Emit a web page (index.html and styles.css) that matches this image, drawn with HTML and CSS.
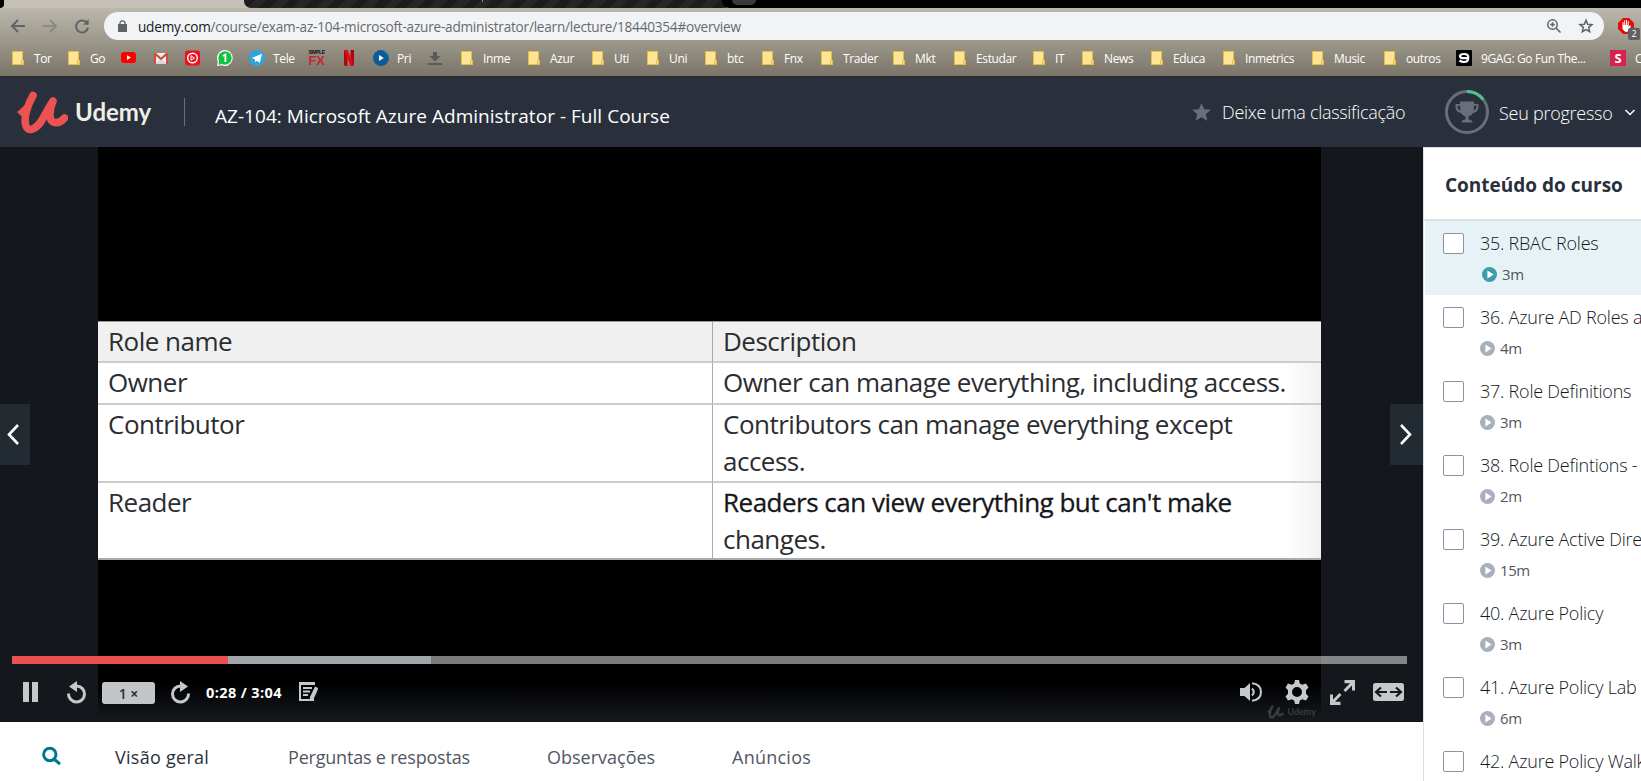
FILE: index.html
```html
<!DOCTYPE html>
<html lang="pt-BR">
<head>
<meta charset="utf-8">
<title>AZ-104: Microsoft Azure Administrator - Full Course | Udemy</title>
<link rel="stylesheet" href="styles.css">
</head>
<body>
<svg class="defs" aria-hidden="true">
  <symbol id="folder" viewBox="0 0 12 14"><path fill="#e5bf45" d="M0 0h11v9h1v5H0z"/><path fill="#ffe593" d="M1 1h9v8.500h-1V13H1z"/><path fill="#ffe593" d="M10 10h1v2.500h-1z"/></symbol>
  <symbol id="play" viewBox="0 0 15 15"><circle cx="7.500" cy="7.500" r="7.500" fill="currentColor"/><path d="M5.400 3.600v7.800l6.200-3.900z" fill="#fff"/></symbol>
  <symbol id="swoosh" viewBox="0 0 51 43"><path fill="none" stroke="currentColor" stroke-width="7.600" stroke-linecap="round" stroke-linejoin="round" d="M16 4.500 C11 13 6 27 9 35 C12 43 21 36 25 29 C29 22 33 14 36 10 C33 17 31 28 36 31 C41 33 45 30 47.500 27"/><path fill="currentColor" d="M13 4 Q10 14 0 21 L4 25 L8 24 L12 18 L18 4z"/></symbol>
</svg>

<div class="browser">
  <div class="tabs"><span class="tab-edge"></span><span class="tab-active"></span><span class="tab-other"><i></i></span><span class="tab-new"><i></i></span></div>
  <div class="toolbar">
    <svg class="nav-icon back" viewBox="0 0 14 14"><path d="M14 7H1M7 1L1 7l6 6"/></svg>
    <svg class="nav-icon forward" viewBox="0 0 14 14"><path d="M0 7h13M7 1l6 6-6 6"/></svg>
    <svg class="nav-icon reload" viewBox="0 0 14 14"><path d="M12 4A6 6 0 1 0 13 8.500"/><path d="M13.700 0v5.800H8z" class="solid"/></svg>
    <div class="omnibox">
      <svg class="lock" viewBox="0 0 9 12"><path d="M0 4h9v8H0z" fill="#5f6368"/><path d="M2 5V3a2.500 2.200 0 0 1 5 0v2" fill="none" stroke="#5f6368" stroke-width="1.300"/></svg>
      <span class="url t"><b>udemy.com</b>/course/exam-az-104-microsoft-azure-administrator/learn/lecture/18440354#overview</span>
      <svg class="zoom" viewBox="0 0 14 14"><circle cx="5.500" cy="5.500" r="4.700"/><path d="M9 9l4.500 4.500M3.200 5.500h4.600M5.500 3.200v4.600"/></svg>
      <svg class="fav" viewBox="0 0 14 14"><path d="M7 1.200l1.700 4 4.300.4-3.300 2.800 1 4.300L7 10.500l-3.700 2.200 1-4.300L1 5.600l4.300-.4z"/></svg>
    </div>
    <div class="blocker"><svg viewBox="0 0 16 16"><path fill="#e40d0d" d="M5 0h6l5 5v6l-5 5H5l-5-5V5z"/><path fill="#fff" d="M4.500 7V4h1v3h.7V2.600h1V7H8V2h1v5h.7V3h1v6l1.300-1.700 1 .7-2 4.500-1.500 1.200H7L4.500 11z"/></svg><span>2</span></div>
  </div>
  <div class="bookmarks">
    <span class="bm"><svg class="fo"><use href="#folder"/></svg><span class="t">Tor</span></span>
    <span class="bm"><svg class="fo"><use href="#folder"/></svg><span class="t">Go</span></span>
    <span class="bm"><svg class="ico yt" viewBox="0 0 16 12"><rect width="15" height="11" x="0" y="0" rx="3" fill="#f00"/><path fill="#fff" d="M6 3.200v4.800l4-2.400z"/></svg></span>
    <span class="bm"><svg class="ico" viewBox="0 0 16 16"><path fill="#f2f2f2" d="M0 3h14v11H0z"/><path fill="#d9d9d9" d="M0 14l7-5 7 5z"/><path fill="#d54b3d" d="M0 3h2l5 4.500L12 3h2v11h-2V6l-5 4.300L2 6v8H0z"/></svg></span>
    <span class="bm"><svg class="ico" viewBox="0 0 16 16"><rect width="15" height="15" y=".5" rx="3" fill="#f00f1c"/><circle cx="7.500" cy="8" r="4.800" fill="#f00f1c" stroke="#fff" stroke-width="1.400"/><path fill="none" stroke="#fff" stroke-width="1" d="M6 5.700v4.600L9.500 8z"/></svg></span>
    <span class="bm"><svg class="ico" viewBox="0 0 16 16"><path fill="#fff" d="M8 0a8 8 0 1 1-3.500 15.300L0 16l.8-4.500A8 8 0 0 1 8 0z"/><circle cx="8" cy="8" r="6.700" fill="#13c143"/><path fill="#13c143" d="M1.400 14.700l.8-4 3 3.200z"/><path d="M6 6l2.400-1.500V12" fill="none" stroke="#fff" stroke-width="1.800"/></svg></span>
    <span class="bm"><svg class="ico" viewBox="0 0 16 16"><circle cx="8" cy="8" r="8" fill="#2ca5e0"/><path fill="#fff" d="M2.800 8L13 3.800l-2.200 9.200-3-2.300-1.500 1.600-.4-3z"/></svg><span class="t">Tele</span></span>
    <span class="bm"><span class="sfx"><i>SIMPLE</i><b>FX</b></span></span>
    <span class="bm"><svg class="ico" viewBox="0 0 16 16"><path fill="#b1060f" d="M0 0h3.500v16L0 15.600zM6.500 0H10v15.600L6.500 16z"/><path fill="#e50914" d="M0 0h3.500L10 15.600 6.500 16z"/></svg></span>
    <span class="bm"><svg class="ico" viewBox="0 0 16 16"><circle cx="8" cy="8" r="8" fill="#0b5c96"/><path fill="#148dc0" d="M8 0a8 8 0 0 1 8 8q-3-6-8-8z"/><path fill="#fff" d="M6 5v6l4.800-3z"/></svg><span class="t">Pri</span></span>
    <span class="bm"><svg class="ico" viewBox="0 0 16 16"><path fill="#5a5a57" d="M5 2h4v4h3.500L7 11.500 1.500 6H5zM0 13h14v2H0z"/></svg></span>
    <span class="bm"><svg class="fo"><use href="#folder"/></svg><span class="t">Inme</span></span>
    <span class="bm"><svg class="fo"><use href="#folder"/></svg><span class="t">Azur</span></span>
    <span class="bm"><svg class="fo"><use href="#folder"/></svg><span class="t">Uti</span></span>
    <span class="bm"><svg class="fo"><use href="#folder"/></svg><span class="t">Uni</span></span>
    <span class="bm"><svg class="fo"><use href="#folder"/></svg><span class="t">btc</span></span>
    <span class="bm"><svg class="fo"><use href="#folder"/></svg><span class="t">Fnx</span></span>
    <span class="bm"><svg class="fo"><use href="#folder"/></svg><span class="t">Trader</span></span>
    <span class="bm"><svg class="fo"><use href="#folder"/></svg><span class="t">Mkt</span></span>
    <span class="bm"><svg class="fo"><use href="#folder"/></svg><span class="t">Estudar</span></span>
    <span class="bm"><svg class="fo"><use href="#folder"/></svg><span class="t">IT</span></span>
    <span class="bm"><svg class="fo"><use href="#folder"/></svg><span class="t">News</span></span>
    <span class="bm"><svg class="fo"><use href="#folder"/></svg><span class="t">Educa</span></span>
    <span class="bm"><svg class="fo"><use href="#folder"/></svg><span class="t">Inmetrics</span></span>
    <span class="bm"><svg class="fo"><use href="#folder"/></svg><span class="t">Music</span></span>
    <span class="bm"><svg class="fo"><use href="#folder"/></svg><span class="t">outros</span></span>
    <span class="bm"><svg class="ico" viewBox="0 0 16 16"><rect width="16" height="16" rx="1" fill="#000"/><path fill="none" stroke="#fff" stroke-width="2.200" d="M12.300 8.200H6.500Q4 8 4 5.800 4.500 4 8 4q4.200 0 4.200 3v1.500Q12 12 8 12q-2.500 0-4.500-1.500"/></svg><span class="t gag">9GAG: Go Fun The...</span></span>
    <span class="bm"><span class="sq">S</span><span class="t gag">C</span></span>
  </div>
</div>

<header class="course-bar">
  <svg class="logo-mark"><use href="#swoosh"/></svg>
  <span class="logo-text t">Udemy</span>
  <span class="sep"></span>
  <h1 class="t">AZ-104: Microsoft Azure Administrator - Full Course</h1>
  <div class="rate"><svg viewBox="0 0 19 18"><path fill="#686f7a" d="M9.500 0l2.600 6.200 6.900.6-5.200 4.300 1.600 6.700-5.900-3.600-5.900 3.600 1.600-6.700L0 6.800l6.900-.6z"/></svg><span class="t">Deixe uma classificação</span></div>
  <div class="progress">
    <svg class="ring" viewBox="0 0 44 44"><circle cx="22" cy="22" r="20.500" fill="none" stroke="#686f7a" stroke-width="3"/><path d="M22 1.500A20.500 20.500 0 0 1 38.200 9.500" fill="none" stroke="#4bc38f" stroke-width="3"/><path fill="#686f7a" d="M15 11.500h14v2.500h4.500v3q0 5-5.500 6-1.500 3-4.500 3.500v3q3.500 0 4 3h-11q.5-3 4-3v-3Q17.500 26 16 23q-5.500-1-5.500-6v-3H15zm-2.500 4.300v1.500q.2 2.500 2.800 3.300l-.3-4.800zm19 0H29l-.3 4.800q2.600-.8 2.800-3.300z"/></svg>
    <span class="t">Seu progresso</span>
    <svg class="chev" viewBox="0 0 10 7"><path d="M.5 1l4.500 4.500L9.500 1"/></svg>
  </div>
</header>

<main class="content">
  <section class="left">
    <div class="player">
      <div class="video">
        <div class="table">
          <div class="cell head"><span class="t">Role name</span></div><div class="cell head"><span class="t">Description</span></div>
          <div class="cell"><span class="t">Owner</span></div><div class="cell"><span class="t">Owner can manage everything, including access.</span></div>
          <div class="cell"><span class="t">Contributor</span></div><div class="cell"><span class="t">Contributors can manage everything except</span><br><span class="t">access.</span></div>
          <div class="cell"><span class="t">Reader</span></div><div class="cell"><span class="t dark">Readers can view everything but can't make</span><br><span class="t">changes.</span></div>
        </div>
        <div class="watermark"><svg><use href="#swoosh"/></svg><span>Udemy</span></div>
      </div>
      <div class="go prev"><svg viewBox="0 0 12 21"><path d="M11 1L2 10.500 11 20"/></svg></div>
      <div class="go next"><svg viewBox="0 0 12 21"><path d="M1 1l9 9.500L1 20"/></svg></div>
      <div class="controls">
        <div class="track"><span class="played"></span><span class="loaded"></span></div>
        <div class="buttons">
          <svg class="c-pause" viewBox="0 0 15 20"><path d="M0 0h6v20H0zM9 0h6v20H9z"/></svg>
          <svg class="c-turn" viewBox="0 0 19 22"><path class="line" d="M1.500 12.500A8 8 0 1 0 9.500 5"/><path d="M2 5.500L10 0v11z"/></svg>
          <span class="speed">1 <small>×</small></span>
          <svg class="c-turn flip" viewBox="0 0 19 22"><path class="line" d="M1.500 12.500A8 8 0 1 0 9.500 5"/><path d="M2 5.500L10 0v11z"/></svg>
          <span class="time t">0:28 / 3:04</span>
          <svg class="c-note" viewBox="0 0 20 20"><path class="line thin" d="M15 3V1H1v17h13v-4M4 6h9M4 9.500h7M4 13h5"/><path d="M0 0h15v3H0zM16 4.500l3 1.500q.5 1-4.500 11L11 19l0-4z"/></svg>
          <svg class="c-vol" viewBox="0 0 22 20"><path d="M0 6h4.500L10 1v18l-5.500-5H0z"/><path class="line thin" d="M12 6.500q3.500 3.500 0 7M12 1.300q9 1 9 8.700t-9 8.700"/></svg>
          <svg class="c-gear" viewBox="0 0 24 24"><path fill-rule="evenodd" d="M10 0h4l.8 3.500 2.400 1.300L21 3.500l2.500 4L21 10.200v3.600l2.500 2.700-2.500 4-3.800-1.300-2.400 1.300L14 24h-4l-.8-3.500-2.400-1.300L3 20.500l-2.500-4L3 13.800v-3.600L.5 7.500l2.500-4 3.800 1.300 2.400-1.300zM12 7a5 5 0 1 0 0 10 5 5 0 0 0 0-10z"/></svg>
          <svg class="c-full" viewBox="0 0 25 25"><path d="M14.500 0H25v10.500h-3v-5l-6.500 6.500-2-2L20 3.200h-5.500zM10.500 25H0V14.500h3v5l6.500-6.500 2 2L5 21.800h5.500z"/></svg>
          <svg class="c-wide" viewBox="0 0 31 18"><rect width="31" height="18" rx="2.500"/><path class="cut" d="M14 9H3M8 4.500L3 9l5 4.500M17 9h11M23 4.500L28 9l-5 4.500"/></svg>
        </div>
      </div>
    </div>
    <nav class="sections">
      <svg viewBox="0 0 19 18"><circle cx="7.800" cy="7.500" r="6.200"/><path d="M12 12l6 5.200"/></svg>
      <span class="t s1">Visão geral</span><span class="t s2">Perguntas e respostas</span><span class="t s3">Observações</span><span class="t s4">Anúncios</span>
    </nav>
  </section>
  <aside class="sidebar">
    <h2><span class="t">Conteúdo do curso</span></h2>
    <div class="item current"><span class="box"></span><div><p class="t">35. RBAC Roles</p><small><svg><use href="#play"/></svg><span>3m</span></small></div></div>
    <div class="item"><span class="box"></span><div><p class="t">36. Azure AD Roles a</p><small><svg><use href="#play"/></svg><span>4m</span></small></div></div>
    <div class="item"><span class="box"></span><div><p class="t">37. Role Definitions</p><small><svg><use href="#play"/></svg><span>3m</span></small></div></div>
    <div class="item"><span class="box"></span><div><p class="t">38. Role Defintions -</p><small><svg><use href="#play"/></svg><span>2m</span></small></div></div>
    <div class="item"><span class="box"></span><div><p class="t">39. Azure Active Dire</p><small><svg><use href="#play"/></svg><span>15m</span></small></div></div>
    <div class="item"><span class="box"></span><div><p class="t">40. Azure Policy</p><small><svg><use href="#play"/></svg><span>3m</span></small></div></div>
    <div class="item"><span class="box"></span><div><p class="t">41. Azure Policy Lab</p><small><svg><use href="#play"/></svg><span>6m</span></small></div></div>
    <div class="item"><span class="box"></span><div><p class="t">42. Azure Policy Walk</p></div></div>
  </aside>
</main>
</body>
</html>
```
FILE: styles.css
```css
* { box-sizing: border-box; }
html, body { margin: 0; height: 100%; overflow: hidden; }
body { width: 1641px; height: 781px; background: #fff; font-family: "Open Sans", "Noto Sans", sans-serif; display: flex; flex-direction: column; }
.defs { display: none; }
svg { display: block; flex: none; overflow: visible; }
.t { white-space: nowrap; }

/* Browser chrome */
.browser { height: 77px; flex: none; background: linear-gradient(#c9c4b9 0, #bcb7ac 11%, #9e998d 52%, #7c766a 98%); border-bottom: 1px solid #2b2b2b; }
.tabs { height: 8px; display: flex; background: linear-gradient(90deg, #c5c0b5 0 250px, #000 250px 715px, #bcb7ac 715px 735px, #000 735px); }
.tab-edge { width: 4px; background: #000; border-bottom-right-radius: 5px; }
.tab-active { width: 240px; }
.tab-other { width: 482px; background: repeating-linear-gradient(135deg, #1c1c1c 0 8px, #262626 8px 16px); border-bottom-left-radius: 7px; display: flex; }
.tab-other i { width: 1px; height: 2px; margin-left: 238px; background: #888; }
.tab-new { flex: 1; margin-left: -4px; background: #000; border-bottom-left-radius: 7px; display: flex; }
.tab-new i { width: 24px; height: 5px; margin-left: 10px; background: #3a3a3a; border-radius: 0 0 12px 12px; }
.toolbar { height: 36px; padding-left: 11px; display: flex; align-items: center; }
.nav-icon { width: 14px; height: 14px; margin-right: 18px; fill: none; stroke: #5f6368; stroke-width: 2; }
.nav-icon.forward { stroke: #8b8983; }
.nav-icon.reload { margin-right: 15px; }
.nav-icon .solid { fill: #5f6368; stroke: none; }
.omnibox { width: 1500px; height: 28px; border-radius: 14px; background: #f1f3f4; display: flex; align-items: center; padding-left: 14px; color: #666a6e; }
.lock { width: 9px; height: 12px; margin-right: 11px; }
.url { font-size: 13.6px; letter-spacing: -0.22px; flex: 1; }
.url b { font-weight: 400; color: #17191c; }
.zoom, .fav { width: 14px; height: 14px; fill: none; stroke: #5f6368; stroke-width: 1.5; margin-right: 18px; }
.fav { margin-right: 11px; }
.blocker { position: relative; margin-left: 14px; }
.blocker svg { width: 16px; height: 16px; }
.blocker span { position: absolute; left: 10px; top: 10px; width: 12px; height: 12px; border-radius: 2px; background: #5f6061; color: #fff; font-size: 9px; line-height: 12px; text-align: center; }
.bookmarks { height: 28px; padding-left: 12px; display: grid; grid-template-columns: 56px 53px 33px 31px 32px 32px 59px 36px 29px 55px 33px 67px 64px 55px 58px 57px 59px 72px 61px 79px 49px 69px 72px 89px 72px 72px 154px 60px; align-items: center; color: #fff; font-size: 12px; letter-spacing: -0.36px; }
.bm { display: flex; align-items: center; height: 18px; }
.bm .fo { width: 12px; height: 14px; margin-right: 10px; }
.bm .ico { width: 16px; height: 16px; margin-right: 8px; }
.bm .yt { height: 12px; }
.bm .gag { margin-left: 1px; }
.sfx { display: flex; flex-direction: column; width: 17px; align-items: center; color: #c8232c; }
.sfx i { font: 700 5px/5px "Liberation Sans", sans-serif; color: #111; letter-spacing: -0.4px; }
.sfx b { font: 700 13px/11px "Liberation Sans", sans-serif; letter-spacing: -0.4px; }
.sq { width: 16px; height: 16px; background: #d6224f; font: 700 13px/16px "Open Sans", sans-serif; text-align: center; margin-right: 8px; }

/* Course header */
.course-bar { height: 70px; flex: none; background: #29303b; color: #fff; display: flex; align-items: center; padding-left: 17px; }
.logo-mark { width: 51px; height: 43px; color: #ec5252; margin-right: 7px; }
.logo-text { width: 76px; font: 700 24px/30px Lato, sans-serif; color: #f0eee8; margin-right: 33px; }
.sep { width: 1px; height: 28px; background: #686f7a; margin-right: 30px; }
h1 { margin: 8px 0 0; width: 977px; font-size: 19px; font-weight: 400; letter-spacing: 0.03px; }
.rate { display: flex; align-items: center; gap: 11px; width: 253px; font-size: 18px; font-weight: 300; letter-spacing: -0.3px; }
.rate svg { width: 19px; height: 18px; margin-top: -1px; }
.progress { display: flex; align-items: center; font-size: 18px; font-weight: 300; letter-spacing: -0.26px; }
.ring { width: 44px; height: 44px; margin-right: 10px; }
.progress .t { width: 113px; margin-right: 13px; margin-top: 2px; }
.chev { width: 10px; height: 7px; fill: none; stroke: #fff; stroke-width: 1.5; }

/* Lecture player */
.content { flex: 1; display: flex; min-height: 0; }
.left { width: 1423px; flex: none; }
.player { position: relative; height: 575px; background: #14171c; padding: 0 102px 0 98px; }
.video { position: relative; height: 575px; padding-top: 174px; background: #000; }
.table { display: grid; grid-template-columns: 615px 1fr; grid-template-rows: 41px 42px 78px 78px; height: 239px; background: linear-gradient(90deg, #fff 97%, #f1f1f1); border-top: 1px solid #999; border-bottom: 2px solid #aaa; color: #2b2d31; font-size: 26px; line-height: 36.5px; letter-spacing: -0.5px; overflow: hidden; }
.cell { padding: 1px 0 0 10px; border-bottom: 2px solid #ccc; }
.cell:nth-child(odd) { border-right: 1px solid #aaa; }
.cell.head { background: #f0f0f0; }
.cell .dark { color: #15171b; -webkit-text-stroke: 0.3px #15171b; }
.watermark { position: absolute; right: 5px; bottom: 3px; display: flex; align-items: center; gap: 3px; color: #3a3c40; font: 700 9px/12px Lato, sans-serif; z-index: 1; }
.watermark svg { width: 17px; height: 14px; }
.go { position: absolute; top: 257px; height: 61px; width: 30px; background: #222a32; display: flex; align-items: center; padding-left: 7px; }
.go svg { width: 12px; height: 21px; fill: none; stroke: #fff; stroke-width: 2.6; }
.prev { left: 0; }
.next { right: 0; width: 33px; padding-left: 10px; }
.controls { position: absolute; left: 0; right: 0; bottom: 0; height: 66px; background: linear-gradient(transparent 40%, #14171c 95%); padding-left: 12px; }
.track { display: flex; width: 1395px; height: 8px; background: rgba(255, 255, 255, .48); }
.played { width: 216px; background: #eb524f; }
.loaded { width: 203px; background: #a1a6a9; }
.buttons { display: flex; align-items: center; height: 56px; padding-left: 11px; fill: #c7c8ca; }
.buttons .line { fill: none; stroke: #c7c8ca; stroke-width: 3; }
.buttons .thin { stroke-width: 2; }
.c-pause { width: 15px; height: 20px; margin-right: 29px; }
.c-turn { width: 19px; height: 22px; margin-right: 16px; }
.flip { transform: scaleX(-1); margin-right: 16px; }
.speed { width: 53px; height: 22px; margin: 2px 16px 0 0; border-radius: 3px; background: #c4c5c8; color: #29303b; font-size: 14px; font-weight: 600; line-height: 23px; text-align: center; }
.speed small { font-size: 14px; font-weight: 700; }
.time { width: 76px; margin: 1px 17px 0 0; color: #fff; font-size: 14.500px; font-weight: 700; letter-spacing: 0.4px; }
.c-note { width: 20px; height: 20px; margin-right: 921px; }
.c-vol { width: 22px; height: 20px; margin-right: 23px; }
.c-gear { width: 24px; height: 24px; margin-right: 21px; }
.c-full { width: 25px; height: 25px; margin-right: 18px; }
.c-wide { width: 31px; height: 18px; }
.cut { fill: none; stroke: #14171c; stroke-width: 2.2; }
.sections { display: flex; align-items: center; height: 59px; padding: 10px 0 0 42px; font-size: 18px; color: #505763; }
.sections svg { width: 19px; height: 18px; margin: -2px 54px 0 0; fill: none; stroke: #007791; stroke-width: 3; }
.s1 { width: 173px; color: #29303b; letter-spacing: 0.27px; }
.s2 { width: 259px; letter-spacing: -0.2px; }
.s3 { width: 185px; }
.s4 { letter-spacing: 0.25px; }

/* Course contents */
.sidebar { width: 218px; flex: none; border-left: 1px solid #dedfe0; border-top: 1px solid #dedfe0; overflow: hidden; }
h2 { margin: 0; height: 73px; padding: 2px 0 0 21px; border-bottom: 2px solid #e0e1e3; font-size: 19px; line-height: 71px; color: #29303b; }
.item { height: 74px; margin-left: 1px; padding: 12px 0 0 18px; display: flex; color: #14171c; }
.item.current { background: #e6f2f5; }
.box { width: 21px; height: 21px; flex: none; border: 1px solid #8a92a3; border-radius: 2px; background: #fff; margin-right: 16px; }
.item p { margin: -2px 0 11px; font-size: 18px; line-height: 24px; font-weight: 300; letter-spacing: -0.23px; }
.item small { display: flex; align-items: center; gap: 5px; height: 16px; font-size: 15px; letter-spacing: -0.4px; color: #505763; }
.item small svg { width: 15px; height: 15px; color: #a9b0bd; }
.current small { padding-left: 2px; }
.current small svg { color: #3f9cad; }
```
